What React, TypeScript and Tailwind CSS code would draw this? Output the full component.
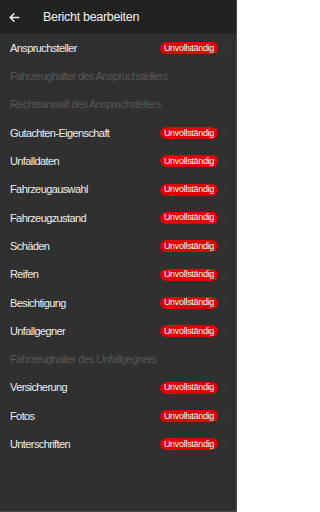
const rows: { label: string; active: boolean }[] = [
  { label: 'Anspruchsteller', active: true },
  { label: 'Fahrzeughalter des Anspruchstellers', active: false },
  { label: 'Rechtsanwalt des Anspruchstellers', active: false },
  { label: 'Gutachten-Eigenschaft', active: true },
  { label: 'Unfalldaten', active: true },
  { label: 'Fahrzeugauswahl', active: true },
  { label: 'Fahrzeugzustand', active: true },
  { label: 'Schäden', active: true },
  { label: 'Reifen', active: true },
  { label: 'Besichtigung', active: true },
  { label: 'Unfallgegner', active: true },
  { label: 'Fahrzeughalter des Unfallgegners', active: false },
  { label: 'Versicherung', active: true },
  { label: 'Fotos', active: true },
  { label: 'Unterschriften', active: true },
];

export default function App() {
  return (
    <div
      className="w-[237px] h-[512px] flex flex-col bg-[#303030] border-r border-b border-[#4a4a4a] overflow-hidden"
      style={{ fontFamily: '"Liberation Sans", Arial, sans-serif' }}
    >
      {/* header */}
      <div className="h-[34px] shrink-0 flex items-center bg-[#222222]">
        <svg className="ml-[8px] w-[13px] h-[13px]" viewBox="0 0 24 24" fill="none" stroke="#f2f2f2" strokeWidth={2.6} strokeLinecap="round" strokeLinejoin="round">
          <path d="M20 12H4M11 5l-7 7 7 7" />
        </svg>
        <span className="ml-[22px] text-[12.5px] tracking-[-0.3px] text-[#f2f2f2]">Bericht bearbeiten</span>
      </div>

      {/* list */}
      <div className="flex flex-col">
        {rows.map((row) => (
          <div key={row.label} className="h-[28.3px] flex items-center pl-[10px] pr-[8px]">
            <span className={`flex-1 text-[11px] tracking-[-0.6px] truncate ${row.active ? 'text-[#ededed]' : 'text-[#575757]'}`}>
              {row.label}
            </span>
            {row.active && (
              <>
                <span className="h-[12px] w-[58px] flex items-center justify-center rounded-full bg-[#e00000] text-white text-[9px] tracking-[-0.3px] leading-none">
                  Unvollständig
                </span>
                <svg className="ml-[4px] w-[6px] h-[8px]" viewBox="0 0 6 8" fill="none" stroke="#454545" strokeWidth={1}>
                  <path d="M1.5 1l3 3-3 3" />
                </svg>
              </>
            )}
          </div>
        ))}
      </div>
    </div>
  );
}
